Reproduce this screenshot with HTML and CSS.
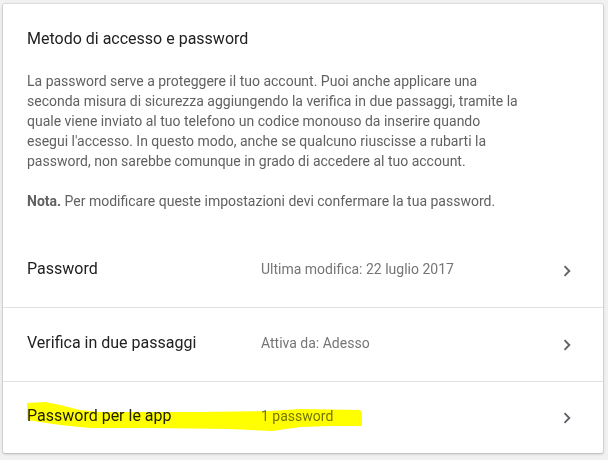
FILE: index.html
```html
<!DOCTYPE html>
<html lang="it">
<head>
<meta charset="utf-8">
<link rel="stylesheet" href="styles.css">
</head>
<body>
<div class="card">
  <div class="intro">
    <h1 class="title">Metodo di accesso e password</h1>
    <p class="desc">La password serve a proteggere il tuo account. Puoi anche applicare una seconda misura di sicurezza aggiungendo la verifica in due passaggi, tramite la quale viene inviato al tuo telefono un codice monouso da inserire quando esegui l'accesso. In questo modo, anche se qualcuno riuscisse a rubarti la password, non sarebbe comunque in grado di accedere al tuo account.</p>
    <p class="desc"><b class="note">Nota.</b> Per modificare queste impostazioni devi confermare la tua password.</p>
  </div>
  <div class="row">
    <span class="label">Password</span>
    <span class="value">Ultima modifica: 22 luglio 2017</span>
    <svg class="chev" viewBox="0 0 24 24" width="24" height="24"><path d="M9.5 7.2l4.8 4.8-4.8 4.8" fill="none" stroke="#5f6368" stroke-width="1.9"/></svg>
  </div>
  <div class="row">
    <span class="label">Verifica in due passaggi</span>
    <span class="value">Attiva da: Adesso</span>
    <svg class="chev" viewBox="0 0 24 24" width="24" height="24"><path d="M9.5 7.2l4.8 4.8-4.8 4.8" fill="none" stroke="#5f6368" stroke-width="1.9"/></svg>
  </div>
  <div class="row row-last">
    <svg class="marker" viewBox="0 0 600 72" width="600" height="72"><polygon fill="#ffff00" points="24,21 42,20 57,23 77,28 97,30 197,30 267,29 297,27 357,28 359,31 359,44 327,44 297,45 269,49 227,47 147,46 87,46 57,43 24,38"/></svg>
    <span class="label">Password per le app</span>
    <span class="value">1 password</span>
    <svg class="chev" viewBox="0 0 24 24" width="24" height="24"><path d="M9.5 7.2l4.8 4.8-4.8 4.8" fill="none" stroke="#5f6368" stroke-width="1.9"/></svg>
  </div>
</div>
</body>
</html>
```
FILE: styles.css
```css
html, body {
  margin: 0;
  background: #f1f1f1;
}
body {
  padding: 4px 5px 7px 3px;
  font-family: Roboto, "Liberation Sans", sans-serif;
}
.card {
  width: 600px;
  height: 449px;
  box-sizing: border-box;
  background: #fff;
  border-radius: 2px;
  box-shadow: 0 0 0 1px rgba(0,0,0,0.06), 0 1px 3px rgba(0,0,0,0.22);
  display: flex;
  flex-direction: column;
}
.intro {
  padding: 23px 24px 20px 24px;
  height: 230px;
  flex: none;
  box-sizing: border-box;
}
.title {
  margin: 0 0 20px 0;
  font-size: 16px;
  line-height: 24px;
  font-weight: 400;
  color: #212121;
}
.desc {
  margin: 0 0 20px 0;
  max-width: 496px;
  font-size: 14px;
  line-height: 20px;
  color: #616161;
}
.note {
  font-weight: 700;
  color: #616161;
}
.row {
  position: relative;
  height: 73px;
  flex: none;
  display: flex;
  align-items: center;
  padding: 0 24px;
  border-bottom: 1px solid #e0e0e0;
}
.row-last {
  border-bottom: none;
  flex: 1;
}
.label {
  position: relative;
  width: 234px;
  flex: none;
  font-size: 16px;
  line-height: 24px;
  color: #212121;
  margin-top: -3px;
}
.value {
  position: relative;
  flex: 1;
  font-size: 14px;
  line-height: 20px;
  color: #757575;
  margin-top: -3px;
}
.chev {
  flex: none;
  display: block;
}
.marker {
  position: absolute;
  left: 0;
  top: 0;
  mix-blend-mode: multiply;
  z-index: 2;
  pointer-events: none;
}
```
